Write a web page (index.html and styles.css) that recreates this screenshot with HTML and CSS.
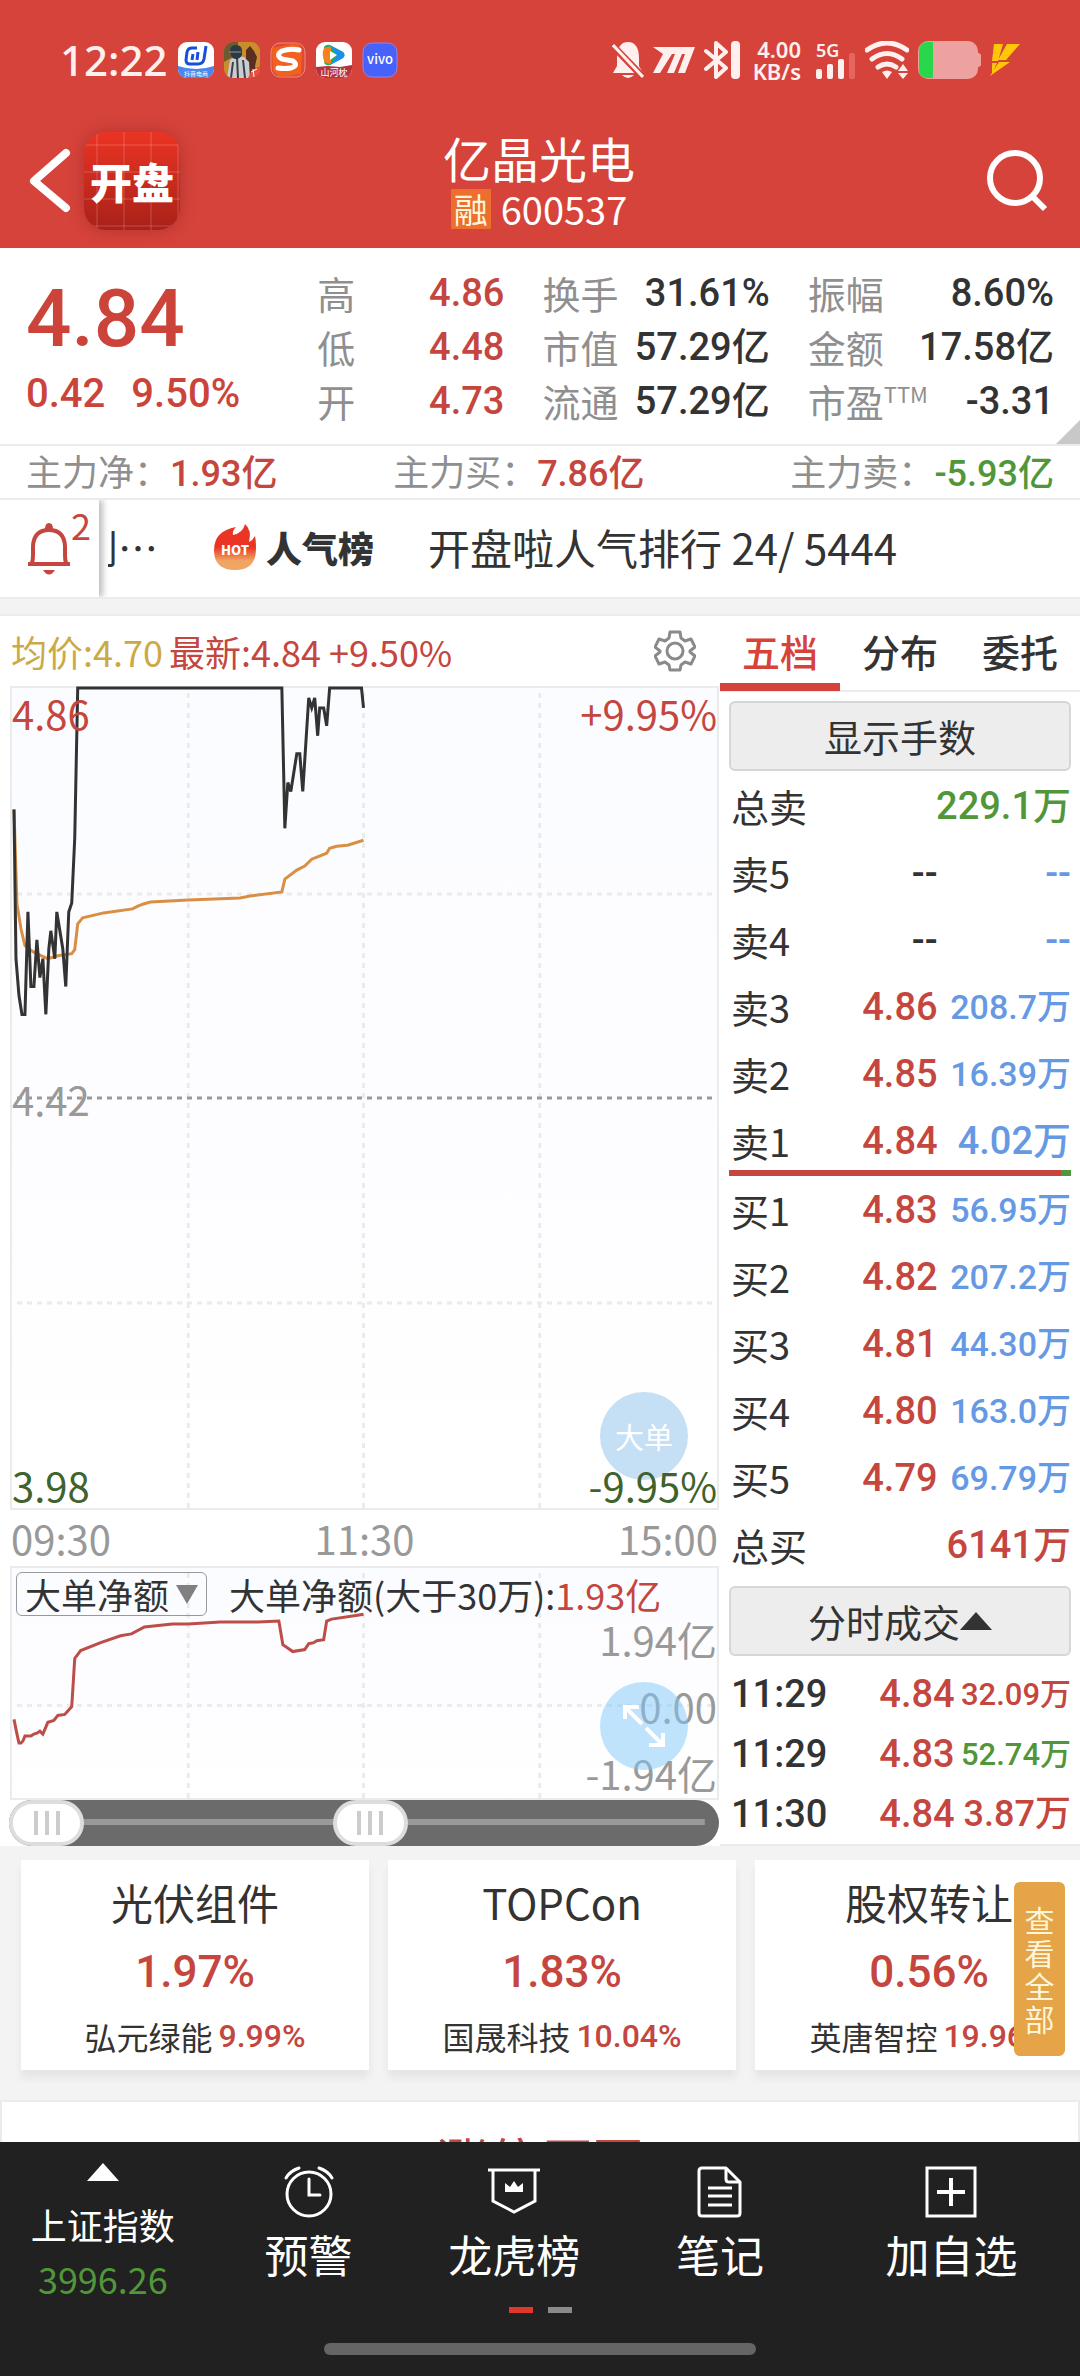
FILE: index.html
```html
<!DOCTYPE html>
<html lang="zh-CN">

<head>
    <meta charset="UTF-8">
    <meta name="viewport" content="width=device-width, initial-scale=1.0">
    <title>亿晶光电 600537</title>
    <link rel="stylesheet" href="styles.css">
</head>

<body>
    <!-- 顶部 -->
    <header class="header">
        <div class="status">
            <span class="status-time">12:22</span>
            <div class="status-apps">
                <svg viewBox="0 0 36 36" class="app-icon">
                    <defs>
                        <clipPath id="round"><rect width="36" height="36" rx="9" /></clipPath>
                    </defs>
                    <g clip-path="url(#round)">
                        <rect width="36" height="36" fill="#fff" />
                        <path d="M0 24q18 6 36 0v12H0z" fill="#4a86ec" />
                        <path d="M19 6h-5q-4 0-5 4l-1 8q0 4 4 4h8q5 0 6-5l2-13M15 12l-1 6M20 10l-1 8" fill="none" stroke="#1450d8" stroke-width="3" />
                        <text x="18" y="34" font-size="6" text-anchor="middle" fill="#fff">抖音电商</text>
                    </g>
                </svg>
                <svg viewBox="0 0 36 36" class="app-icon">
                    <g clip-path="url(#round)">
                        <rect width="36" height="36" fill="#c98d2e" />
                        <path d="M0 0h14v12L0 20z" fill="#6d5a33" />
                        <path d="M22 8l4-4 4 5 3 6-2 9 3 12H22z" fill="#5b2f20" />
                        <path d="M3 36l3-18 6-4 8 1 5 5 1 16z" fill="#c9ccd0" />
                        <path d="M13 15l1 21M9 20l-2 16M19 18l2 18" stroke="#3d4046" stroke-width="2" />
                        <path d="M6 9q0-6 6-6t6 6v4q-2 4-6 4t-5-4z" fill="#2c3a44" />
                        <path d="M5 10h12" stroke="#8d9aa4" stroke-width="1" />
                        <path d="M24 36l4-8 8-4v12z" fill="#e8503a" />
                        <path d="M27 30l6-3M29 27l1 8" stroke="#fff" stroke-width="1" />
                    </g>
                </svg>
                <svg viewBox="0 0 36 36" class="app-icon">
                    <rect x="1" y="1" width="34" height="34" rx="9" fill="#e04a32" stroke="#ec8a80" />
                    <path d="M2 6l26-5 4 9-1 22-21 3-7-6z" fill="#f2611f" />
                    <path d="M29 8Q20 6 12 9q-7 4 0 8 5 1 11 2 6 4-2 7-6 1-13 0" fill="none" stroke="#fff" stroke-width="5" stroke-linecap="round" />
                </svg>
                <svg viewBox="0 0 36 36" class="app-icon">
                    <g clip-path="url(#round)">
                        <rect width="36" height="36" fill="#fff" />
                        <path d="M8 5q2-3 6-2l13 7q3 3 0 6l-13 7q-5 1-6-3z" fill="#19b84c" />
                        <path d="M8 6q-3 7 1 15l6 1V4z" fill="#f58220" />
                        <path d="M13 3l14 7q3 3 0 6l-13 7 7-10z" fill="#1a8ff0" />
                        <path d="M14 9l7 4-7 5z" fill="#fff" />
                        <path d="M0 25l12-1 12 1 12-2v13H0z" fill="#b5343c" />
                        <text x="18" y="34" font-size="9" text-anchor="middle" fill="#fff">山河枕</text>
                    </g>
                </svg>
                <svg viewBox="0 0 36 36" class="app-icon">
                    <rect x="1" y="1" width="34" height="34" rx="9" fill="#4762fb" stroke="#8f86e6" />
                    <text x="18" y="22" font-size="13" font-weight="500" text-anchor="middle" fill="#fff">vivo</text>
                </svg>
            </div>
            <div class="status-right">
                <svg viewBox="0 0 32 38" width="32" height="38" fill="#fff0ef">
                    <path d="M5 18Q5 1 16 1t11 17v7l4 7H1l4-7z" />
                    <path d="M10 34h12q-6 6-12 0z" />
                    <path d="M1 5l30 31" stroke="#d6433b" stroke-width="7" />
                    <path d="M1 4l30 32" stroke="#fff0ef" stroke-width="3" />
                </svg>
                <svg viewBox="0 0 42 26" width="42" height="26" fill="#fff0ef">
                    <path d="M0 0h42l-10 26h-7l7-19h-3l-8 19h-7l8-19h-3L7 26H0L10 7z" />
                </svg>
                <svg viewBox="0 0 36 38" width="36" height="38">
                    <path d="M2 10l20 17-10 9V2l10 9L2 28" fill="none" stroke="#fff0ef" stroke-width="4" stroke-linejoin="round" stroke-linecap="round" />
                    <rect x="27" y="0" width="9" height="38" rx="4" fill="#fff0ef" />
                </svg>
                <div class="status-speed"><span>4.00</span><span>KB/s</span></div>
                <div class="status-net">
                    <span>5G</span>
                    <svg viewBox="0 0 40 26" width="40" height="26" fill="#fff0ef">
                        <rect x="0" y="16" width="6" height="10" rx="2" />
                        <rect x="11" y="11" width="6" height="15" rx="2" />
                        <rect x="22" y="6" width="6" height="20" rx="2" />
                        <rect x="33" y="0" width="6" height="26" rx="2" fill="#e5665f" />
                    </svg>
                </div>
                <svg viewBox="0 0 44 38" width="44" height="38">
                    <path d="M2 9q20-14 40 0M7 18q15-11 30 0M13 26q9-6 18 0" fill="none" stroke="#fff0ef" stroke-width="5" stroke-linecap="round" />
                    <path d="M17 31q5-3 10 0l-5 7zM33 30l5-7 5 7zM33 32h10l-5 6z" fill="#fff0ef" />
                </svg>
                <svg viewBox="0 0 63 38" width="63" height="38">
                    <path d="M56 12h4q3 0 3 3v8q0 3-3 3h-4z" fill="#eda2a0" />
                    <rect x="0" y="0" width="60" height="38" rx="10" fill="#eda2a0" />
                    <path d="M15 1h-5Q1 1 1 10v18q0 9 9 9h5z" fill="#29d84a" />
                </svg>
                <svg viewBox="0 0 30 32" width="30" height="32" fill="#ffc60a">
                    <path d="M4 0h9L8 17H2zM17 0h13L16 16H8zM2 19h5L2 30zM9 18h11L0 32z" />
                </svg>
            </div>
        </div>
        <div class="topbar">
            <div class="topbar-left">
                <button class="icon-btn" aria-label="返回">
                    <svg viewBox="0 0 44 66" width="44" height="66">
                        <path d="M38 5L6 33l32 27" fill="none" stroke="#fff" stroke-width="8" stroke-linecap="round" stroke-linejoin="round" />
                    </svg>
                </button>
                <div class="logo">开盘</div>
            </div>
            <div class="title">
                <h1>亿晶光电</h1>
                <p><span class="tag">融</span>600537</p>
            </div>
            <button class="icon-btn search" aria-label="搜索">
                <svg viewBox="0 0 64 66" width="64" height="66">
                    <circle cx="29" cy="30" r="25" fill="none" stroke="#fff" stroke-width="6" />
                    <path d="M47 49l12 12" stroke="#fff" stroke-width="6" />
                </svg>
            </button>
        </div>
    </header>

    <main class="content">
        <!-- 行情概览 -->
        <section class="quote">
            <div class="quote-now">
                <div class="price">4.84</div>
                <div class="change"><span>0.42</span><span>9.50%</span></div>
            </div>
            <dl class="quote-col">
                <div><dt>高</dt><dd class="red">4.86</dd></div>
                <div><dt>低</dt><dd class="red">4.48</dd></div>
                <div><dt>开</dt><dd class="red">4.73</dd></div>
            </dl>
            <dl class="quote-col">
                <div><dt>换手</dt><dd>31.61%</dd></div>
                <div><dt>市值</dt><dd>57.29亿</dd></div>
                <div><dt>流通</dt><dd>57.29亿</dd></div>
            </dl>
            <dl class="quote-col">
                <div><dt>振幅</dt><dd>8.60%</dd></div>
                <div><dt>金额</dt><dd>17.58亿</dd></div>
                <div><dt>市盈<sup>TTM</sup></dt><dd>-3.31</dd></div>
            </dl>
            <svg class="corner" viewBox="0 0 24 24" width="24" height="24">
                <path d="M24 0v24H0z" fill="#c8c8c8" />
            </svg>
        </section>

        <section class="funds">
            <p>主力净：<span class="num red">1.93亿</span></p>
            <p>主力买：<span class="num red">7.86亿</span></p>
            <p>主力卖：<span class="num green">-5.93亿</span></p>
        </section>

        <!-- 公告滚动条 -->
        <section class="ticker">
            <button class="bell" aria-label="提醒">
                <svg viewBox="0 0 46 54" width="46" height="54">
                    <path d="M2 42h42M6 41q1-3 1-8V24Q8 8 23 8t16 16v9q0 5 1 8" fill="none" stroke="#c4463e" stroke-width="4" />
                    <path d="M19 7q0-6 4-6t4 6zM17 48h12q-6 9-12 0z" fill="#c4463e" />
                </svg>
                <span>2</span>
            </button>
            <div class="ticker-text">
                <span class="ticker-prev">到…</span>
                <svg viewBox="0 0 42 46" width="42" height="46">
                    <defs>
                        <linearGradient id="fire" x1="0" y1="0" x2="0" y2="1">
                            <stop offset="0.5" stop-color="#ea3526" />
                            <stop offset="0.8" stop-color="#f0a562" />
                        </linearGradient>
                    </defs>
                    <path d="M0 26Q0 7 22 3q-4 4-3 8 10-2 12-11 7 6 4 18 4-2 6-6 1 4 1 13 0 21-21 21T0 26z" fill="url(#fire)" />
                    <text x="21" y="31" font-size="13" font-weight="900" text-anchor="middle" fill="#fff">HOT</text>
                </svg>
                <b>人气榜</b>
                <span class="ticker-rank">开盘啦人气排行 24/ 5444</span>
            </div>
        </section>

        <section class="board">
            <!-- 分时图 -->
            <div class="chart">
                <div class="chart-head">
                    <span class="avg">均价:4.70</span>
                    <span class="red">最新:4.84 +9.50%</span>
                    <button class="icon-btn gear" aria-label="设置">
                        <svg viewBox="0 0 42 42" width="42" height="42" fill="none" stroke="#8a8a8a" stroke-width="3" stroke-linejoin="round">
                            <path d="M16 2h10l1 6 4 3 6-2 4 8-5 4v1l5 4-4 8-6-2-4 3-1 5H16l-1-5-4-3-6 2-4-8 5-4v-1l-5-4 4-8 6 2 4-3z" />
                            <circle cx="21" cy="21" r="8" />
                        </svg>
                    </button>
                </div>
                <div class="plot plot-main">
                    <svg viewBox="0 0 708 824" preserveAspectRatio="none">
                        <g class="grid">
                            <path d="M177 5V824M353 5V824M530 5V824" />
                            <path d="M5 207H708M5 618H708" />
                            <path class="grid-mid" d="M5 412H708" />
                        </g>
                        <polyline class="line-avg" points="2,122 5,217 9,242 13,259 21,265 29,269 36,272 46,269 60,267 63,263 66,237 71,231 92,226 121,222 127,219 132,217 139,215 177,213 229,211 239,209 271,205 274,192 286,183 294,179 301,172 316,166 319,161 326,159 337,158 353,153" />
                        <polyline class="line-price" points="2,122 4,272 7,309 10,328 13,328 16,225 19,300 22,300 25,253 28,291 31,272 34,328 37,262 39,244 43,272 45,225 51,262 54,300 57,225 60,216 63,151 66,0 271,0 274,141 277,95 280,104 286,66 289,66 292,104 298,10 301,20 304,10 307,48 309,20 313,20 316,38 319,0 351,0 353,20" />
                    </svg>
                    <button class="float">大单</button>
                    <span class="mark mark-tl red">4.86</span>
                    <span class="mark mark-tr red">+9.95%</span>
                    <span class="mark mark-ml">4.42</span>
                    <span class="mark mark-bl dark-green">3.98</span>
                    <span class="mark mark-br dark-green">-9.95%</span>
                </div>
                <div class="axis"><span>09:30</span><span>11:30</span><span>15:00</span></div>
                <div class="plot plot-sub">
                    <svg viewBox="0 0 708 234" preserveAspectRatio="none">
                        <g class="grid">
                            <path d="M177 5V234M353 5V234M530 5V234" />
                            <path d="M5 140H708" />
                        </g>
                        <polyline class="line-net" points="2,154 5,169 7,178 9,178 11,176 13,171 19,171 22,169 25,168 28,166 31,169 36,157 42,155 46,150 53,149 60,141 63,92 69,84 89,76 109,69 120,67 133,60 161,57 177,57 209,55 247,55 268,54 272,78 282,85 294,83 298,77 303,76 306,74 313,73 316,54 321,52 347,48 353,47" />
                    </svg>
                    <div class="sub-head">
                        <label class="picker">
                            <select aria-label="指标">
                                <option>大单净额</option>
                            </select>
                        </label>
                        <p>大单净额(大于30万):<span class="red">1.93亿</span></p>
                    </div>
                    <div class="sub-scale"><span>1.94亿</span><span>0.00</span><span>-1.94亿</span></div>
                    <button class="float float-zoom" aria-label="放大">
                        <svg viewBox="0 0 42 42" width="42" height="42" fill="none" stroke="#fff" stroke-width="4">
                            <path d="M2 14V2h14M3 3l16 16M40 28v12H26M39 39L23 23" />
                        </svg>
                    </button>
                </div>
                <div class="range">
                    <input type="range" min="0" max="100" value="0" aria-label="开始时间">
                    <input type="range" min="0" max="100" value="51" aria-label="结束时间">
                </div>
            </div>

            <!-- 五档盘口 -->
            <div class="depth">
                <div class="tabs">
                    <button class="tab active">五档</button>
                    <button class="tab">分布</button>
                    <button class="tab">委托</button>
                </div>
                <div class="depth-body">
                    <button class="bar-btn">显示手数</button>
                    <table class="book">
                        <colgroup><col class="col-name"><col class="col-price"><col></colgroup>
                        <tr><th>总卖</th><td colspan="2" class="green">229.1万</td></tr>
                        <tr><th>卖5</th><td>--</td><td class="blue">--</td></tr>
                        <tr><th>卖4</th><td>--</td><td class="blue">--</td></tr>
                        <tr><th>卖3</th><td class="red">4.86</td><td class="blue small">208.7万</td></tr>
                        <tr><th>卖2</th><td class="red">4.85</td><td class="blue small">16.39万</td></tr>
                        <tr><th>卖1</th><td class="red">4.84</td><td class="blue">4.02万</td></tr>
                    </table>
                    <div class="ratio"><i style="width: 97%"></i></div>
                    <table class="book">
                        <colgroup><col class="col-name"><col class="col-price"><col></colgroup>
                        <tr><th>买1</th><td class="red">4.83</td><td class="blue small">56.95万</td></tr>
                        <tr><th>买2</th><td class="red">4.82</td><td class="blue small">207.2万</td></tr>
                        <tr><th>买3</th><td class="red">4.81</td><td class="blue small">44.30万</td></tr>
                        <tr><th>买4</th><td class="red">4.80</td><td class="blue small">163.0万</td></tr>
                        <tr><th>买5</th><td class="red">4.79</td><td class="blue small">69.79万</td></tr>
                        <tr><th>总买</th><td colspan="2" class="red">6141万</td></tr>
                    </table>
                    <button class="bar-btn bar-btn-deal">分时成交<i class="up"></i></button>
                    <table class="deals">
                        <tr><th>11:29</th><td class="red">4.84</td><td class="red small">32.09万</td></tr>
                        <tr><th>11:29</th><td class="red">4.83</td><td class="green small">52.74万</td></tr>
                        <tr><th>11:30</th><td class="red">4.84</td><td class="red">3.87万</td></tr>
                    </table>
                </div>
            </div>
        </section>

        <!-- 相关板块 -->
        <section class="sectors">
            <div class="cards">
                <a class="card" href="#">
                    <h2>光伏组件</h2>
                    <strong>1.97%</strong>
                    <p>弘元绿能<span>9.99%</span></p>
                </a>
                <a class="card" href="#">
                    <h2>TOPCon</h2>
                    <strong>1.83%</strong>
                    <p>国晟科技<span>10.04%</span></p>
                </a>
                <a class="card" href="#">
                    <h2>股权转让</h2>
                    <strong>0.56%</strong>
                    <p>英唐智控<span>19.96%</span></p>
                </a>
            </div>
            <button class="all">查看全部</button>
        </section>

        <section class="reason">
            <h2>涨停原因</h2>
        </section>
    </main>

    <!-- 底部导航 -->
    <footer class="footer">
        <nav class="nav">
            <a href="#" class="nav-index">
                <i class="up"></i>
                <span>上证指数</span>
                <em>3996.26</em>
            </a>
            <a href="#">
                <svg viewBox="0 0 52 52" width="52" height="52" fill="none" stroke="#fff" stroke-width="3" stroke-linecap="round">
                    <circle cx="26" cy="28" r="22" />
                    <path d="M26 13v16h11M3 12q4-7 13-10M49 12q-4-7-13-10" />
                </svg>
                <span>预警</span>
            </a>
            <a href="#">
                <svg viewBox="0 0 52 52" width="52" height="52">
                    <path d="M0 4h52M5 4v31l21 11 21-11V4" fill="none" stroke="#fff" stroke-width="3" />
                    <path d="M17 26v-9l5 4 4-6 4 6 5-4v9z" fill="#fff" />
                </svg>
                <span>龙虎榜</span>
            </a>
            <a href="#">
                <svg viewBox="0 0 52 52" width="52" height="52" fill="none" stroke="#fff" stroke-width="3" stroke-linejoin="round">
                    <path d="M8 2h24l14 14v31q0 3-3 3H8q-3 0-3-3V5q0-3 3-3z" />
                    <path d="M32 2v11q0 3 3 3h11M14 22h24M14 30h24M14 39h24" />
                </svg>
                <span>笔记</span>
            </a>
            <a href="#">
                <svg viewBox="0 0 52 52" width="52" height="52" fill="none" stroke="#fff">
                    <rect x="2" y="2" width="48" height="48" stroke-width="3" />
                    <path d="M12 26h28M26 12v28" stroke-width="4" />
                </svg>
                <span>加自选</span>
            </a>
        </nav>
        <div class="dots"><i class="on"></i><i></i></div>
        <div class="home"></div>
    </footer>
</body>

</html>
```

FILE: styles.css
```css
/* 全局样式 */

*,
 ::after,
 ::before {
    margin: 0;
    padding: 0;
    box-sizing: border-box;
}

body {
    height: 100vh;
    display: flex;
    flex-direction: column;
    overflow: hidden;
    background-color: #f3f3f3;
    color: #333;
    font-family: "Noto Sans CJK SC", sans-serif;
    font-size: 38px;
    line-height: 1;
}

button,
select {
    border: none;
    background: none;
    color: inherit;
    font: inherit;
}

a {
    color: inherit;
    text-decoration: none;
}

svg {
    display: block;
}

i,
em {
    font-style: normal;
}

.red {
    color: #c4463e;
}

.green {
    color: #52963a;
}

.blue {
    color: #6699e3;
}

.dark-green {
    color: #40622c;
}

.num {
    font-family: Roboto, "Noto Sans CJK SC", sans-serif;
    font-weight: 500;
}

.up {
    display: inline-block;
    border: solid transparent;
    border-width: 0 16px 18px;
    border-bottom-color: currentColor;
}
/* 顶部 */

.header {
    flex: none;
    background-color: #d6433b;
    color: #fff;
}

.status {
    display: flex;
    align-items: center;
    height: 120px;
    padding: 0 60px;
}

.status-time {
    color: #fff0ef;
    font-family: "Noto Sans", sans-serif;
    font-size: 42px;
    font-weight: 500;
}

.status-apps {
    display: flex;
    gap: 10px;
    margin-left: 10px;
}

.app-icon {
    width: 36px;
    height: 36px;
}

.status-right {
    display: flex;
    align-items: center;
    gap: 9px;
    margin-left: auto;
    color: #fff0ef;
    font-family: "Noto Sans", sans-serif;
    font-size: 22px;
    font-weight: 600;
}

.status-speed {
    display: flex;
    flex-direction: column;
    align-items: flex-end;
    margin-left: 4px;
}

.status-net {
    display: flex;
    flex-direction: column;
    margin-left: 6px;
    font-size: 18px;
}

.status-net svg {
    margin-top: -6px;
}

.topbar {
    display: grid;
    grid-template-columns: 1fr auto 1fr;
    align-items: center;
    height: 128px;
    padding: 0 30px 6px 28px;
}

.topbar-left {
    display: flex;
    align-items: center;
    gap: 12px;
}

.logo {
    display: flex;
    align-items: center;
    justify-content: center;
    width: 96px;
    height: 98px;
    border-radius: 22px;
    background-image: repeating-linear-gradient(90deg, transparent 0 12px, rgba(255, 255, 255, .1) 12px 14px, transparent 14px 27px), repeating-linear-gradient(transparent 0 12px, rgba(255, 255, 255, .1) 12px 14px, transparent 14px 27px), linear-gradient(#ea3424, #a92119);
    box-shadow: 0 0 16px rgba(120, 30, 25, .4);
    font-size: 42px;
    font-weight: 900;
}

.title {
    text-align: center;
}

.title h1 {
    font-size: 48px;
    font-weight: 400;
    line-height: 56px;
}

.title p {
    display: flex;
    align-items: center;
    justify-content: center;
    gap: 10px;
    line-height: 48px;
}

.tag {
    width: 40px;
    background-color: #ec6f30;
    color: #fff5d8;
    font-size: 34px;
    line-height: 40px;
}

.search {
    justify-self: end;
}
/* 行情概览 */

.content {
    flex: 1;
    min-height: 0;
    overflow: hidden;
}

.quote {
    position: relative;
    display: grid;
    grid-template-columns: 253fr 187fr 227fr 246fr;
    column-gap: 38px;
    height: 198px;
    padding: 18px 26px 0;
    border-bottom: 2px solid #ebebeb;
    background-color: #fff;
}

.corner {
    position: absolute;
    right: 0;
    bottom: 0;
}

.quote-now {
    color: #cc433a;
    font-family: Roboto, sans-serif;
    font-weight: 500;
}

.price {
    font-size: 80px;
    line-height: 106px;
}

.change {
    display: flex;
    gap: 26px;
    font-size: 40px;
    line-height: 44px;
}

.quote-col div {
    display: flex;
    justify-content: space-between;
    line-height: 54px;
}

.quote-col dt {
    color: #8f8f8f;
    white-space: nowrap;
}

.quote-col sup {
    font-size: 22px;
    line-height: 1;
    vertical-align: 14px;
}

.quote-col dd {
    font-family: Roboto, "Noto Sans CJK SC", sans-serif;
    font-weight: 500;
    white-space: nowrap;
}

.funds {
    display: grid;
    grid-template-columns: 5fr 4fr 5fr;
    height: 54px;
    padding: 0 26px;
    border-bottom: 2px solid #ebebeb;
    background-color: #fff;
    color: #8f8f8f;
    font-size: 36px;
    line-height: 48px;
    white-space: nowrap;
}

.funds p:last-child {
    text-align: right;
}
/* 公告滚动条 */

.ticker {
    display: flex;
    height: 99px;
    margin-bottom: 15px;
    border-bottom: 2px solid #ebebeb;
    background-color: #fff;
}

.bell {
    position: relative;
    flex: none;
    width: 99px;
    padding-left: 26px;
    box-shadow: 4px 0 6px rgba(0, 0, 0, .25);
    clip-path: inset(0 -10px 0 0);
    color: #c4463e;
}

.bell span {
    position: absolute;
    top: 6px;
    right: 8px;
    font-size: 36px;
}

.ticker-text {
    display: flex;
    align-items: center;
    flex: 1;
    margin-left: 9px;
    padding-bottom: 4px;
    overflow: hidden;
    white-space: nowrap;
}

.ticker-prev {
    width: 106px;
    font-size: 40px;
    text-indent: -30px;
}

.ticker b {
    margin-left: 10px;
    font-size: 36px;
    font-weight: 900;
}

.ticker-rank {
    margin-left: 54px;
    font-size: 42px;
}
/* 分时图 */

.board {
    display: grid;
    grid-template-columns: 2fr 1fr;
    border-top: 2px solid #ebebeb;
    background-color: #fff;
}

.chart-head {
    display: flex;
    align-items: center;
    gap: 6px;
    height: 70px;
    padding: 0 24px 0 11px;
    font-size: 36px;
}

.avg {
    color: #cbaa45;
}

.gear {
    margin-left: auto;
}

.plot {
    position: relative;
    margin: 0 1px 0 10px;
    border: 2px solid #ebebeb;
    background-image: linear-gradient(#fbfcff, #fdfdff 50%, #fff);
    color: #999;
    font-size: 40px;
}

.plot > svg {
    width: 100%;
    height: 100%;
    overflow: visible;
}

.plot polyline,
.grid path {
    fill: none;
    vector-effect: non-scaling-stroke;
}

.plot polyline {
    stroke-width: 3px;
}

.grid path {
    stroke: #ebebeb;
    stroke-width: 3px;
    stroke-dasharray: 5 5;
}

.grid .grid-mid {
    stroke: #999;
}

.line-avg {
    stroke: #d98f43;
}

.line-price {
    stroke: #333;
}

.line-net {
    stroke: #bd4d47;
}

.plot-main {
    height: 824px;
}

.plot-sub {
    height: 234px;
}

.mark {
    position: absolute;
}

.mark-tl,
.mark-tr {
    top: 5px;
}

.mark-ml {
    top: 391px;
}

.mark-bl,
.mark-br {
    bottom: 3px;
}

.mark-tr,
.mark-br {
    right: 0;
}

.float {
    position: absolute;
    right: 29px;
    bottom: 28px;
    width: 88px;
    height: 88px;
    border-radius: 50%;
    background-color: #c5dff5;
    color: #fff;
    font-size: 29px;
}

.float-zoom {
    display: flex;
    align-items: center;
    justify-content: center;
    background-color: rgba(130, 200, 250, .5);
}

.axis {
    display: flex;
    justify-content: space-between;
    padding: 0 2px 0 11px;
    color: #999;
    font-size: 40px;
    line-height: 56px;
}

.sub-head {
    position: absolute;
    top: 4px;
    left: 4px;
    display: flex;
    align-items: center;
    gap: 22px;
    color: #333;
    font-size: 36px;
    white-space: nowrap;
}

.picker {
    position: relative;
}

.picker select {
    display: block;
    width: 191px;
    height: 44px;
    padding-left: 8px;
    border: 1px solid #999;
    border-radius: 6px;
    appearance: none;
}

.picker::after {
    content: "";
    position: absolute;
    top: 13px;
    right: 9px;
    border: solid transparent;
    border-width: 19px 11px 0;
    border-top-color: #808080;
}

.sub-scale {
    position: absolute;
    top: 38px;
    right: 0;
    line-height: 67px;
    text-align: right;
}

.sub-scale span {
    display: block;
}

.range {
    position: relative;
    height: 46px;
    margin: 0 1px 0 9px;
    border-radius: 23px;
    background: linear-gradient(#999, #999) no-repeat 0 19px / 98% 6px #6b6b6b;
}

.range input {
    position: absolute;
    top: 0;
    left: 0;
    width: 100%;
    height: 46px;
    background: none;
    appearance: none;
    pointer-events: none;
}

.range input::-webkit-slider-thumb {
    width: 75px;
    height: 46px;
    border: 4px solid #ddd;
    border-radius: 23px;
    background: linear-gradient(90deg, #ccc 0 4px, transparent 4px 11px, #ccc 11px 15px, transparent 15px 22px, #ccc 22px) no-repeat center / 26px 24px #fff;
    appearance: none;
    pointer-events: auto;
}
/* 五档盘口 */

.tabs {
    display: grid;
    grid-template-columns: repeat(3, 1fr);
    height: 76px;
    border-bottom: 2px solid #ebebeb;
}

.tab {
    height: 75px;
    padding-top: 2px;
    border-bottom: 8px solid transparent;
    font-weight: 500;
}

.tab.active {
    border-color: #d6433b;
    color: #d6433b;
}

.depth {
    border-bottom: 2px solid #ebebeb;
}

.depth-body {
    padding: 9px 9px 0;
}

.bar-btn {
    display: flex;
    align-items: center;
    justify-content: center;
    width: 100%;
    height: 70px;
    border: 2px solid #d6d6d6;
    border-radius: 6px;
    background-color: #ededed;
}

.bar-btn-deal {
    margin: 8px 0;
}

.book,
.deals {
    width: 100%;
    border-collapse: collapse;
    table-layout: fixed;
}

.book {
    margin-top: 1px;
}

th {
    padding-left: 2px;
    font-weight: 400;
    text-align: left;
}

td,
.deals th {
    font-family: Roboto, "Noto Sans CJK SC", sans-serif;
    font-weight: 500;
    text-align: right;
    white-space: nowrap;
}

.book tr {
    height: 67px;
}

.col-name {
    width: 30%;
}

.col-price {
    width: 31%;
}

.book .small {
    font-size: 34px;
}

.ratio {
    height: 6px;
    margin-top: -4px;
    background-color: #52963a;
}

.ratio i {
    display: block;
    height: 100%;
    background-color: #c4463e;
}

.ratio + .book {
    margin-top: 0;
}

.deals tr {
    height: 60px;
}

.deals th {
    width: 35%;
    text-align: left;
}

.deals td:nth-child(2) {
    width: 31%;
}

.deals td:last-child {
    font-size: 36px;
}

.deals .small:last-child {
    font-size: 31px;
}
/* 相关板块 */

.sectors {
    position: relative;
}

.cards {
    display: flex;
    gap: 19px;
    padding: 14px 21px 30px;
    overflow: hidden;
}

.card {
    flex: none;
    width: 348px;
    height: 210px;
    padding-top: 16px;
    background-color: #fff;
    box-shadow: 0 8px 8px rgba(0, 0, 0, .06);
    text-align: center;
}

.card h2 {
    font-size: 42px;
    font-weight: 400;
    line-height: 52px;
}

.card strong {
    display: block;
    color: #c4463e;
    font-family: Roboto, sans-serif;
    font-size: 44px;
    font-weight: 500;
    line-height: 88px;
}

.card p {
    display: flex;
    justify-content: center;
    gap: 6px;
    font-size: 32px;
    line-height: 40px;
}

.card span {
    color: #c4463e;
    font-family: Roboto, sans-serif;
    font-weight: 500;
}

.all {
    position: absolute;
    top: 36px;
    right: 15px;
    width: 51px;
    height: 174px;
    padding: 0 10px;
    border-radius: 6px;
    background-color: #e4a447;
    color: #fff5d8;
    font-size: 30px;
    line-height: 33px;
    word-break: break-all;
}

.reason {
    height: 200px;
    padding-top: 32px;
    border: 2px solid #ebebeb;
    background-color: #fff;
}

.reason h2 {
    color: #c4463e;
    font-size: 52px;
    font-weight: 400;
    text-align: center;
}
/* 底部导航 */

.footer {
    flex: none;
    height: 234px;
    background-color: #212121;
    color: #fff;
}

.nav {
    display: grid;
    grid-template-columns: 4fr 4fr 4fr 4fr 5fr;
    height: 160px;
}

.nav a {
    display: flex;
    flex-direction: column;
    align-items: center;
    padding-top: 24px;
    font-size: 44px;
    line-height: 72px;
}

.nav .nav-index {
    padding-top: 21px;
    font-size: 36px;
    line-height: 54px;
}

.nav-index span {
    margin-top: 16px;
}

.nav-index em {
    color: #52963a;
}

.dots {
    display: flex;
    justify-content: center;
    gap: 15px;
    padding-top: 5px;
}

.dots i {
    width: 24px;
    height: 6px;
    background-color: #8a8a8a;
}

.dots .on {
    background-color: #dd3829;
}

.home {
    width: 40%;
    height: 12px;
    margin: 30px auto 0;
    border-radius: 6px;
    background-color: #656565;
}
```
